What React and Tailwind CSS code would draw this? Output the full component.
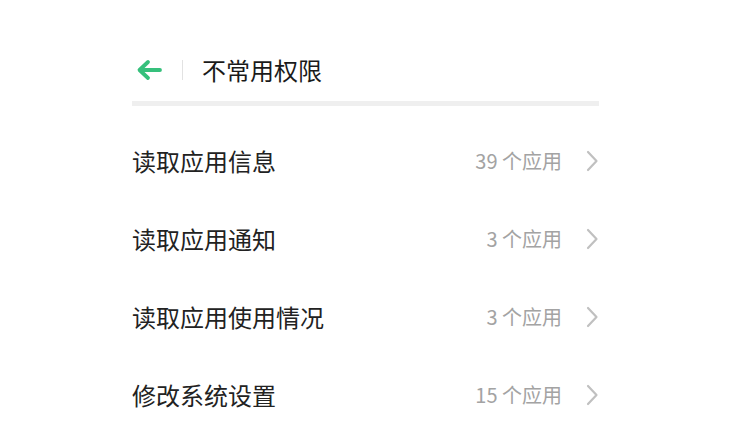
import React from 'react';

const rows = [
  { name: '读取应用信息', count: '39 个应用' },
  { name: '读取应用通知', count: '3 个应用' },
  { name: '读取应用使用情况', count: '3 个应用' },
  { name: '修改系统设置', count: '15 个应用' },
];

const font = { fontFamily: '"Noto Sans CJK SC", "Noto Sans", sans-serif' };

const App = () => {
  return (
    <div className="w-[743px] h-[448px] bg-white overflow-hidden" style={font}>
      <div className="ml-[132px] w-[467px] pt-[56px]">
        <div className="h-[28px] flex items-center">
          <svg width="28" height="22" viewBox="0 0 28 22" className="ml-[3px] shrink-0">
            <path d="M25 11H5M13 3L4.5 11L13 19" fill="none" stroke="#36c07c" strokeWidth="3.8" strokeLinecap="round" strokeLinejoin="round" />
          </svg>
          <div className="w-px h-[20px] bg-[#e2e2e2] ml-[19px]" />
          <span className="ml-[19px] text-[24px] leading-none text-[#1a1a1a]">不常用权限</span>
        </div>
        <div className="mt-[17px] h-[5px] bg-[#efefef]" />
        <div className="mt-[16px]">
          {rows.map((row) => (
            <div key={row.name} className="h-[78px] flex items-center justify-between">
              <span className="text-[24px] leading-none text-[#222]">{row.name}</span>
              <div className="flex items-center">
                <span className="text-[20px] leading-none text-[#a3a3a3]">{row.count}</span>
                <svg width="14" height="22" viewBox="0 0 14 22" className="ml-[23px]">
                  <path d="M3 2L11.5 11L3 20" fill="none" stroke="#c0c0c0" strokeWidth="2.2" strokeLinecap="round" strokeLinejoin="round" />
                </svg>
              </div>
            </div>
          ))}
        </div>
      </div>
    </div>
  );
};

export default App;
